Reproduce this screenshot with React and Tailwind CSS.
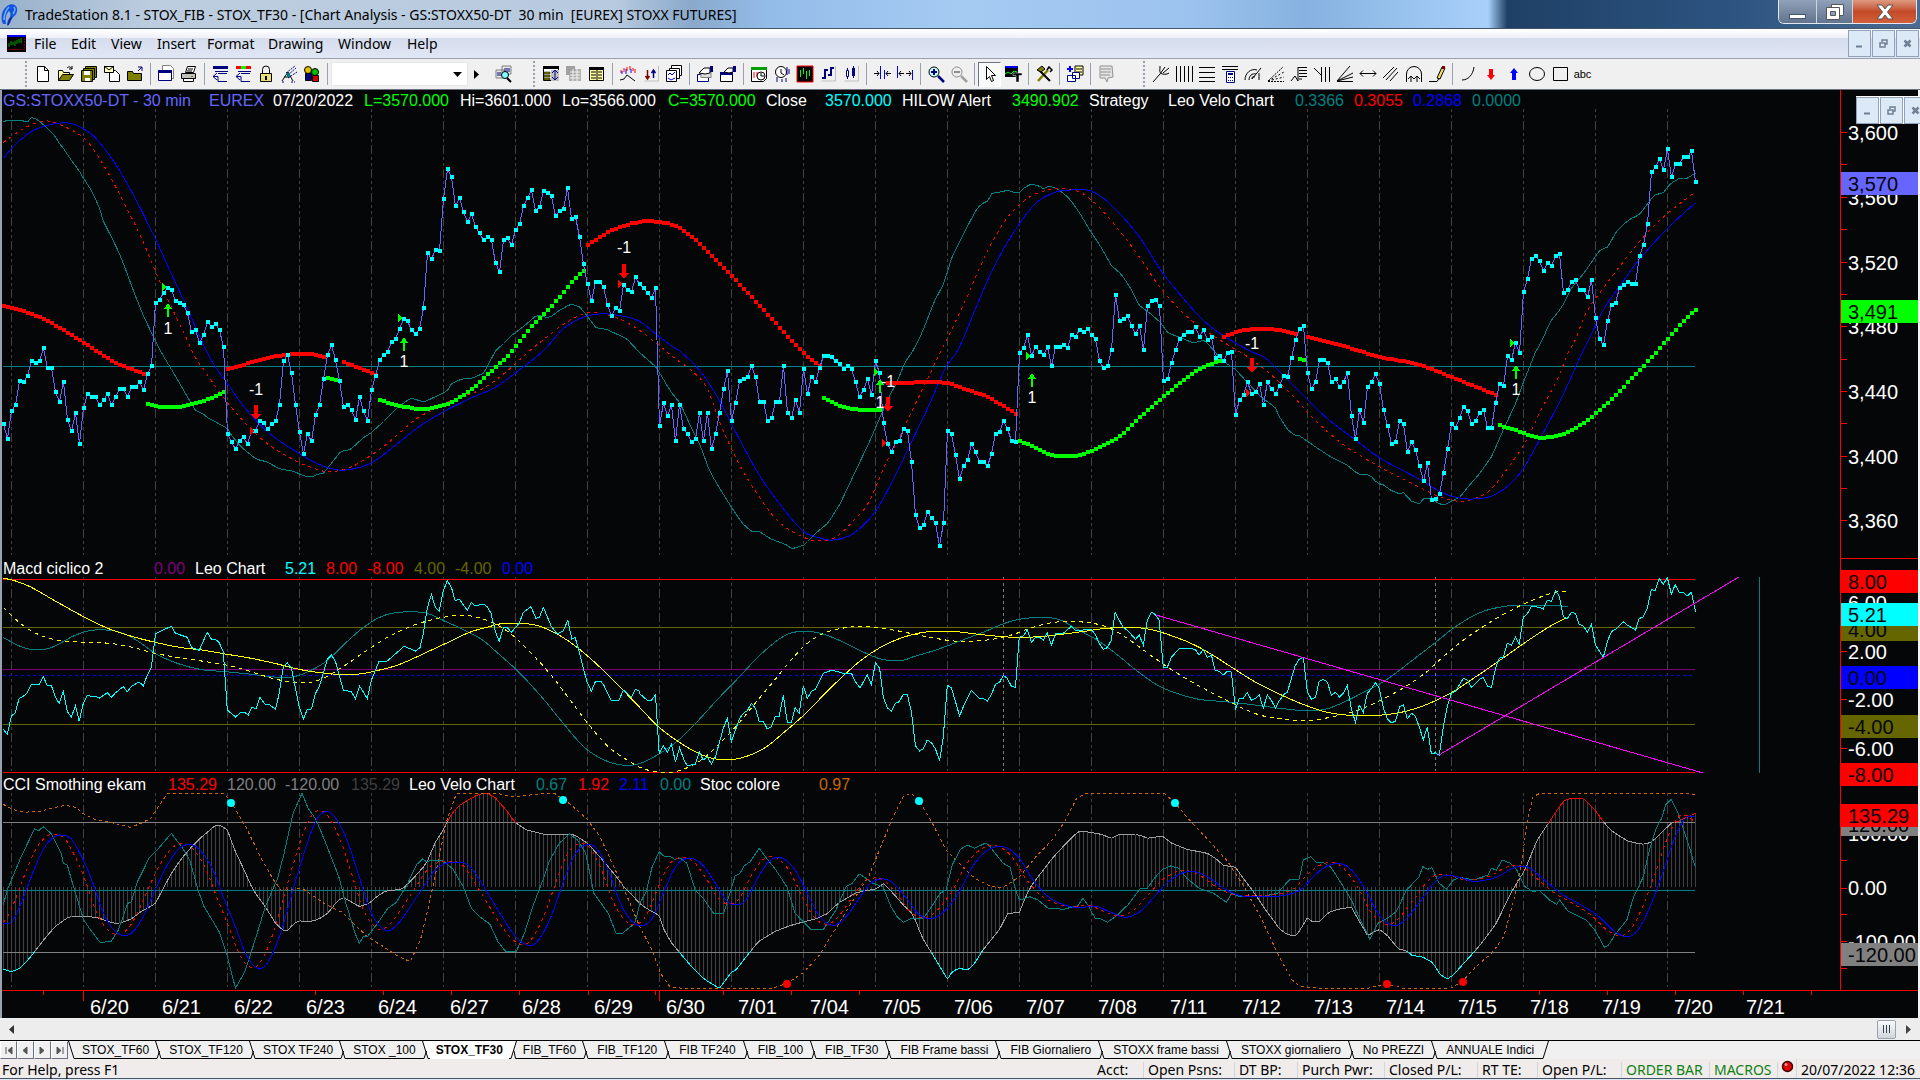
import React, { useState } from 'react';

const TEAL = '#008080';
const RED = '#ff0000';
const BLUE = '#0000ff';
const CYAN = '#00ffff';
const LIME = '#00ff00';
const YELLOW = '#ffff00';
const OLIVE = '#666600';
const MAGENTA = '#ff00ff';
const ORANGE = '#cc6600';

// Bars are 4px apart, 18 bars per trading day
const FIRST_BAR = 3.5;
const BAR_STEP = 4;
const DAY_LINES = Array.from({ length: 19 }, (_, i) => 11.5 + i * 72).concat([1379.5, 1451.5, 1523.5, 1595.5, 1667.5]);
const DAYS = ['6/20', '6/21', '6/22', '6/23', '6/24', '6/27', '6/28', '6/29', '6/30', '7/01', '7/04', '7/05', '7/06', '7/07', '7/08', '7/11', '7/12', '7/13', '7/14', '7/15', '7/18', '7/19', '7/20', '7/21'];

const PRICE = [
  424, 439, 411, 405, 381, 382, 376, 361, 363, 361, 348, 368, 368, 392, 402, 382, 420, 431,
  413, 444, 408, 394, 397, 397, 405, 400, 394, 405, 397, 389, 389, 397, 387, 387, 382, 390,
  374, 366, 303, 300, 293, 288, 290, 301, 303, 305, 313, 332, 330, 343, 335, 322, 327, 324,
  330, 347, 434, 442, 449, 441, 437, 444, 431, 431, 421, 423, 429, 424, 421, 405, 361, 355,
  373, 405, 432, 454, 434, 441, 415, 405, 379, 355, 345, 360, 381, 407, 405, 410, 420, 397,
  411, 421, 390, 376, 360, 355, 352, 342, 339, 329, 319, 321, 330, 334, 329, 308, 253, 259,
  250, 251, 199, 169, 177, 206, 198, 212, 222, 214, 227, 233, 240, 237, 240, 263, 272, 240,
  238, 245, 230, 224, 206, 198, 190, 211, 207, 191, 193, 196, 216, 211, 209, 188, 219, 217,
  237, 264, 284, 301, 282, 282, 287, 305, 316, 308, 311, 285, 290, 292, 277, 284, 288, 293,
  298, 288, 426, 403, 416, 405, 441, 405, 429, 434, 442, 439, 413, 441, 413, 449, 434, 413,
  389, 371, 421, 403, 381, 379, 377, 366, 377, 402, 402, 421, 418, 402, 402, 366, 413, 418,
  400, 413, 369, 394, 377, 382, 368, 356, 356, 357, 361, 364, 369, 366, 369, 382, 397, 390,
  379, 395, 361, 373, 423, 444, 452, 442, 441, 429, 431, 462, 515, 528, 525, 512, 518, 523,
  546, 523, 431, 434, 455, 479, 466, 460, 444, 452, 462, 462, 466, 454, 434, 432, 421, 429,
  441, 442, 353, 348, 335, 356, 347, 352, 355, 347, 366, 347, 347, 345, 348, 335, 337, 330,
  332, 329, 335, 339, 361, 368, 366, 350, 295, 321, 319, 316, 326, 334, 326, 350, 306, 301,
  300, 306, 381, 379, 363, 350, 339, 335, 332, 332, 327, 337, 330, 340, 337, 358, 356, 361,
  353, 352, 415, 400, 395, 382, 394, 392, 384, 405, 382, 389, 394, 386, 376, 377, 358, 340,
  329, 326, 373, 389, 382, 360, 360, 363, 382, 379, 387, 382, 373, 416, 439, 410, 423, 387,
  382, 374, 384, 410, 426, 444, 442, 421, 424, 452, 442, 450, 466, 481, 463, 500, 499, 494,
  473, 449, 424, 428, 418, 407, 411, 424, 421, 413, 410, 428, 428, 403, 384, 386, 356, 360,
  343, 353, 292, 279, 259, 256, 261, 271, 263, 266, 256, 254, 293, 290, 282, 280, 290, 290,
  297, 280, 318, 339, 345, 321, 305, 303, 288, 285, 282, 284, 284, 256, 245, 224, 172, 167,
  159, 170, 149, 177, 164, 164, 157, 157, 151, 182,
];

const parse = (text) => text.trim().split(/\s+/).map((pair) => pair.split(',').map(Number));

// Sample blocks of the lower panes: each block has its own left edge, stored at 2.45 x 3 units per pixel
const blocks = (top, ...parts) =>
  parts.flatMap((text, i) => parse(text).map(([x, y]) => [i * 640 + x / 2.45, top + y / 3]));

const VELO_FAST = parse(`3,122 8,120 24,121 28,122 32,117 38,120 45,126 55,136 59,143 64,149 71,160 78,169 84,179 93,193 99,207 104,223
112,238 121,257 128,276 135,295 144,317 154,338 161,352 176,377 188,398 196,411 202,413 208,418 227,428 232,436 241,447 256,459 267,462
280,469 293,471 304,476 312,477 318,474 324,473 330,465 341,451 350,450 363,438 371,433 384,421 398,407 411,398 424,402 439,395 447,391
452,383 462,379 473,378 484,373 489,363 496,350 502,345 512,335 523,327 537,315 549,318 560,310 571,304 580,307 588,317 596,328 606,329
627,339 639,352 656,367 671,392 680,403 691,427 701,447 709,470 720,489 732,508 742,523 751,531 760,532 771,539 787,545 792,549 804,545
816,533 828,523 840,504 856,470 869,443 881,415 889,397 897,382 905,362 913,351 922,333 934,302 944,283 952,257 964,233 975,212 981,204
988,201 992,193 1001,192 1008,190 1018,194 1024,188 1031,184 1039,186 1044,189 1049,186 1058,189 1069,198 1079,212 1091,232 1101,247
1111,265 1122,275 1131,289 1139,305 1152,315 1160,322 1168,333 1179,337 1193,343 1205,340 1213,350 1224,362 1235,369 1248,383 1262,398
1275,407 1280,418 1288,430 1294,435 1300,436 1317,448 1331,457 1347,465 1358,474 1370,475 1377,483 1384,485 1390,490 1400,494 1403,492
1411,501 1420,504 1424,498 1433,499 1437,503 1444,505 1460,497 1468,487 1480,473 1492,456 1504,428 1515,405 1525,378 1536,351 1541,343
1550,322 1562,307 1572,287 1584,273 1600,250 1608,247 1616,232 1625,223 1632,218 1639,215 1649,202 1654,195 1663,193 1670,184 1680,178
1688,178 1695,173`);

const VELO_MID = parse(`3,143 18,132 33,124 47,121 61,125 84,138 98,156 112,180 124,203 141,237 155,270 169,302 184,333 194,355 204,370
227,402 249,427 269,445 300,463 316,469 330,472 351,467 367,458 388,443 416,419 433,410 453,400 482,389 506,372 527,353 543,340 567,322
587,313 604,314 624,321 639,330 656,343 677,360 691,370 707,388 720,423 738,462 758,495 779,522 803,537 820,541 836,537 856,518 869,502
885,465 897,442 909,417 926,382 940,353 950,333 967,297 987,252 1007,218 1028,198 1048,190 1067,189 1085,195 1109,218 1138,255 1162,290
1191,320 1220,340 1248,357 1269,373 1279,382 1292,395 1313,418 1341,443 1378,466 1419,487 1443,498 1464,501 1488,492 1504,473 1525,443
1541,410 1558,378 1568,353 1574,343 1586,313 1602,290 1627,257 1647,233 1668,213 1695,192`);

const VELO_SLOW = parse(`3,159 11,149 29,133 45,126 61,123 73,124 90,133 104,148 118,168 135,198 155,238 171,273 188,310 210,358 227,383
245,408 269,433 300,454 316,463 333,469 347,470 371,463 392,448 420,426 445,411 469,399 496,387 514,374 543,351 563,329 584,317 600,314
616,315 639,321 657,335 673,347 681,352 701,372 718,398 732,425 758,473 779,503 803,531 820,538 834,540 854,533 875,512 893,480 909,447
930,403 946,367 958,350 975,310 991,273 1007,243 1020,223 1036,203 1056,192 1073,190 1091,191 1109,203 1138,235 1162,272 1183,298
1203,320 1224,336 1252,352 1264,357 1279,371 1300,392 1329,420 1353,438 1380,458 1419,479 1443,493 1460,498 1474,499 1492,496 1509,485
1523,469 1541,437 1562,397 1582,353 1592,333 1602,312 1619,287 1639,260 1668,228 1695,203`);

const HILOW_RED = [
  '3,306 20,310 41,318 61,329 84,343 102,355 118,364 144,374',
  '227,369 253,362 278,356 296,354 312,354 324,357',
  '343,362 359,368 376,375',
  '587,245 612,230 639,222 660,222 677,227 693,238 713,258 738,283 767,314 803,353 819,366',
  '887,383 905,383 926,382 946,383 967,390 987,397 1016,414',
  '1223,337 1240,331 1260,329 1279,330 1295,334',
  '1307,337 1333,343 1362,352 1380,357 1419,365 1451,377 1496,395',
].map(parse);

const HILOW_GREEN = [
  '147,404 163,407 176,407 192,404 208,399 224,392',
  '327,378 339,381',
  '379,400 400,406 420,409 433,408 449,403 469,391 490,372 508,355 531,327 555,302 571,283 583,271',
  '823,398 840,406 860,410 880,410',
  '1019,441 1036,448 1052,455 1073,456 1093,450 1118,437 1142,415 1171,390 1199,369 1219,361',
  '1299,359 1303,360',
  '1499,425 1517,431 1535,437 1551,437 1570,431 1596,413 1627,383 1656,352 1676,329 1695,310',
].map(parse);

const LEO = blocks(560,
  `8,508 18,523 28,468 37,459 47,415 57,409 67,398 77,373 96,373 106,350 116,377 126,377 136,412 145,430 155,395 165,455 175,471 185,437
194,484 204,430 214,406 224,409 234,409 243,415 263,398 273,412 283,398 302,380 312,395 322,379 341,366 351,377 361,345 371,322 381,222
390,215 420,199 430,220 459,232 469,262 488,271 508,217 518,238 528,238 537,248 547,275 557,450 577,471 588,459 600,457 608,466 616,443
628,445 637,412 650,434 660,434 675,448 684,400 694,320 704,308 714,325 733,440 743,478 753,448 763,447 773,400 782,380 792,340 802,298
812,285 822,305 831,345 841,390 861,395 871,416 881,378 900,416 910,360 929,303 949,303 990,259 1018,273 1029,263 1037,220 1047,145
1057,103 1067,143 1076,153 1086,92 1096,62 1106,82 1115,122 1125,117 1135,135 1145,151 1155,127 1164,138 1184,132 1194,140 1203,160
1213,212 1223,244 1233,203 1243,203 1253,217 1272,190 1282,157 1301,140 1313,175 1322,171 1331,142 1350,197 1365,222 1380,212 1391,181
1401,237 1409,232 1419,275 1429,325 1439,368 1449,394 1459,364 1472,364 1480,377 1498,423 1517,420 1527,390 1547,411 1557,388 1566,394`,
  `0,402 18,421 28,421 38,405 47,580 57,557 67,577 77,552 87,606 97,563 107,598 116,617 136,612 145,575 155,600 165,590 175,612 185,590
204,505 214,475 224,545 243,478 253,460 263,452 273,430 283,445 292,484 302,484 312,507 322,500 331,470 341,470 351,406 361,487 371,487
380,443 390,460 400,378 410,415 420,394 430,388 449,340 469,331 488,336 498,340 518,340 528,365 539,384 557,345 567,373 577,308 587,325
596,412 606,443 616,454 626,430 635,425 645,403 655,403 665,455 675,558 685,573 694,566 704,540 714,548 724,567 734,603 743,530 753,376
763,383 773,425 783,468 792,440 812,391 822,404 832,415 841,415 851,423 861,404 871,373 881,367 890,346 900,355 910,379 920,382 929,232
939,228 949,210 959,247 969,232 979,232 988,240 998,218 1008,256 1018,220 1037,220 1057,199 1067,212 1106,208 1116,225 1125,250 1135,268
1145,263 1155,240 1164,157 1174,180 1184,203 1194,210 1214,238 1223,225 1233,255 1243,180 1253,157 1262,163 1272,180 1282,323 1292,322
1302,292 1321,266 1350,266 1360,268 1370,285 1380,268 1390,293 1400,285 1409,330 1419,334 1429,345 1439,334 1449,336 1459,450 1468,415
1478,415 1488,397 1498,421 1508,415 1517,404 1527,445 1537,404 1547,421 1557,445 1566,423`,
  `0,420 8,404 18,397 28,355 37,318 47,298 57,292 67,394 77,418 87,412 96,364 106,358 116,366 126,406 136,397 146,411 155,400 165,377
175,448 185,487 194,435 204,457 214,400 224,386 234,368 243,384 253,443 263,476 273,489 283,483 293,440 302,434 312,476 322,460 331,468
341,500 351,539 361,502 371,582 381,578 390,586 400,500 410,440 420,400 430,394 439,376 449,355 459,360 469,382 479,370 489,358 498,352
508,378 518,383 528,325 537,295 547,292 557,250 567,255 577,230 586,252 596,172 606,162 616,138 635,142 645,147 655,120 665,125 675,92
684,108 694,170 704,176 714,157 724,160 733,193 743,198 753,216 763,193 773,255 792,292 802,245 812,215 822,208 841,185 851,195 871,210
880,176 890,170 900,145 910,88 919,93 929,55 939,73 949,53 959,102 968,74 978,97 988,97 998,108 1008,97 1018,155`);

const MACD_SLOW = blocks(560,
  `8,55 30,60 70,78 100,98 150,133 205,170 260,203 320,228 380,247 440,262 500,271 557,283 620,296 680,312 733,328 790,339 830,343 880,342
930,330 970,317 1010,297 1050,274 1100,246 1150,217 1190,203 1230,191 1290,191 1330,202 1380,233 1430,278 1490,345 1530,395`,
  `0,443 45,500 100,550 140,578 180,596 230,598 270,585 310,560 350,520 400,467 450,405 500,345 550,293 600,255 650,230 700,216 760,214
810,220 860,227 920,232 980,230 1040,222 1100,212 1150,204 1200,203 1240,206 1290,222 1350,250 1400,283 1460,330 1510,368`,
  '0,403 50,430 110,455 170,466 240,466 300,456 360,433 420,398 480,350 540,300 600,248 660,200 702,173');

const MACD_DASH = blocks(560,
  `8,142 40,180 80,215 130,238 180,245 250,248 310,258 380,280 450,295 520,308 570,319 620,337 670,356 720,367 760,367 800,350 850,312
910,262 960,225 1020,193 1080,173 1130,166 1170,172 1210,190 1250,220 1300,278 1350,345 1400,425 1440,490 1490,560 1530,595`,
  `0,622 30,633 70,638 110,626 150,600 200,545 250,478 290,418 330,360 370,300 410,250 450,220 490,206 540,199 590,204 650,217 710,232
780,244 850,240 910,225 960,203 1000,190 1050,184 1110,190 1150,204 1200,240 1250,285 1310,335 1370,378 1440,423 1510,462`,
  '0,476 70,482 130,470 180,455 240,425 310,378 360,335 400,290 450,240 510,190 560,155 610,125 670,98 702,94');

const MACD_TEAL = blocks(560,
  `8,232 40,254 75,268 110,268 140,255 180,228 220,212 260,210 300,219 340,245 380,280 430,308 490,328 550,335 610,342 680,352 720,350
760,332 800,303 850,245 890,203 930,172 970,158 1040,158 1080,178 1130,206 1180,238 1220,280 1270,335 1330,415 1380,490 1430,560
1480,600 1530,616`,
  `0,610 45,583 90,545 140,485 190,418 240,355 290,290 340,238 370,219 410,214 450,223 490,242 540,272 590,297 640,302 670,290 720,272
780,245 840,217 900,187 940,176 990,172 1030,180 1070,207 1120,240 1170,285 1220,335 1270,377 1320,402 1370,418 1430,425 1500,434`,
  '0,445 60,452 110,448 150,430 200,400 260,360 320,305 380,248 430,200 490,158 550,139 600,136 680,136 702,141');

const CCI = blocks(790,
  `8,538 28,545 45,538 65,515 85,485 110,445 135,410 155,392 170,380 220,380 245,385 270,397 290,401 320,388 345,365 380,342 400,295
420,250 445,205 470,170 490,145 510,125 525,107 540,105 557,120 575,180 600,245 620,300 650,350 675,400 700,428 720,400 735,392 755,396
780,388 805,368 825,335 840,322 860,335 880,350 905,340 925,318 945,303 985,298 1000,280 1020,255 1045,220 1065,160 1085,122 1096,95
1110,65 1130,42 1165,18 1180,10 1195,10 1215,25 1240,60 1262,97 1290,120 1330,132 1360,135 1405,133 1440,160 1480,215 1510,260 1530,293
1560,330`,
  `0,342 25,362 47,375 55,410 75,455 100,492 130,535 160,570 195,595 210,570 225,545 235,540 270,485 290,455 330,425 365,408 405,394
435,385 460,370 485,340 530,308 580,296 597,280 620,310 645,345 670,375 690,440 715,490 735,530 753,568 765,545 780,535 805,540 820,520
840,480 880,420 900,372 930,366 945,320 960,285 985,245 1010,205 1040,165 1060,140 1075,124 1100,126 1130,133 1155,145 1175,133 1220,134
1245,145 1280,138 1300,158 1340,178 1390,190 1410,205 1430,227 1458,230 1475,260 1500,300 1530,355 1560,405`,
  `0,418 20,435 40,438 68,382 78,394 95,397 120,366 150,356 175,352 190,385 215,437 243,418 262,435 290,477 310,482 325,498 345,498
375,518 390,550 408,568 425,555 450,520 475,487 500,450 530,400 565,310 600,240 630,150 660,95 690,40 700,28 725,25 745,26 775,65
795,100 815,125 850,152 885,163 905,160 925,140 958,100 980,92 1018,70`);

const CYCLE_FAST = blocks(790,
  `8,345 18,300 50,205 85,116 95,122 106,110 125,130 150,190 155,220 165,225 180,290 205,390 225,425 245,457 272,455 290,420 313,340
322,335 335,280 365,205 385,180 420,130 445,170 465,210 485,300 500,350 520,390 537,425 555,490 577,595 600,545 625,450 650,350 680,265
695,195 718,70 740,10 755,55 775,90 800,165 830,260 845,330 870,430 880,460 890,440 900,440 925,400 950,355 970,338 995,290 1020,225
1035,207 1045,215 1060,210 1085,212 1110,238 1135,290 1155,355 1175,380 1200,402 1220,455 1240,486 1265,484 1285,430 1305,350 1330,270
1345,215 1370,160 1395,132 1415,150 1435,190 1455,310 1490,370 1510,432 1525,430 1555,400 1566,350`,
  `0,340 15,305 30,230 47,185 60,200 75,200 85,208 100,205 115,220 135,300 155,325 180,370 205,370 220,310 233,258 245,250 255,228
270,215 292,175 310,205 330,235 360,290 380,370 420,420 450,417 480,360 505,290 520,280 537,252 550,262 570,280 595,290 615,350 630,380
645,397 665,385 695,384 720,340 735,310 750,300 765,225 785,178 802,165 820,175 845,160 855,165 870,190 890,220 907,232 920,300 930,330
955,320 975,330 1000,355 1040,358 1060,350 1070,352 1085,325 1097,345 1115,385 1130,387 1145,397 1165,380 1195,345 1225,297 1243,295
1260,265 1280,238 1300,228 1320,235 1340,265 1370,295 1405,310 1437,337 1450,308 1470,320 1525,320 1566,308`,
  `0,300 25,268 47,267 57,210 75,200 88,216 105,217 125,232 150,280 175,330 195,385 220,447 240,400 265,383 285,365 310,300 340,262
350,230 362,238 372,233 390,280 408,297 425,270 440,262 475,270 510,255 518,235 530,240 545,210 565,220 580,240 600,290 620,305 635,300
660,330 678,343 685,330 705,363 750,390 770,418 795,472 805,465 820,435 850,390 865,325 890,260 905,180 920,120 935,85 945,45 958,28
975,70 985,105 1000,160 1017,230`);

const CYCLE_SLOW = blocks(790,
  `8,400 30,395 55,330 80,250 105,180 130,143 150,135 175,147 200,200 225,270 250,360 275,415 305,438 330,420 355,370 380,300 410,225
440,175 465,163 490,180 520,235 550,330 580,420 605,500 635,537 660,510 690,420 720,290 750,170 775,90 798,64 820,80 850,150 880,260
910,370 945,422 970,408 1000,360 1030,305 1070,235 1110,217 1150,228 1190,300 1230,380 1265,442 1297,467 1320,450 1350,380 1385,260
1410,190 1440,163 1465,180 1490,240 1520,340 1545,390`,
  `0,408 15,403 35,375 60,300 90,225 120,205 150,220 185,280 210,330 235,345 260,330 290,260 320,210 350,205 380,240 410,310 440,380
475,406 505,380 540,320 570,275 610,271 650,320 680,370 712,386 740,370 780,310 820,220 860,175 895,172 930,205 960,265 1000,320
1040,345 1080,353 1115,348 1150,365 1190,382 1225,365 1260,320 1300,270 1345,244 1390,260 1430,295 1470,317 1510,320`,
  `0,318 50,300 80,262 110,232 145,220 175,240 210,300 240,370 275,407 300,397 340,340 380,275 405,256 440,262 475,274 530,262 570,235
605,230 640,262 690,312 730,340 780,378 820,425 855,440 880,415 910,340 940,240 965,150 990,88 1005,78 1018,82`);

// the middle line leads the slow one by seven pixels
const CYCLE_MID = CYCLE_SLOW.map(([x, y]) => [x - 7, y - 1]).concat([[1695, 823]]);

const STOC = blocks(790,
  `8,43 30,58 60,67 100,63 135,52 160,46 185,52 205,72 235,90 270,97 320,112 345,100 370,85 385,55 410,12 450,11 550,11 567,38 580,65
600,105 640,205 670,270 690,302 740,295 770,320 800,345 840,368 870,405 900,440 940,470 970,495 1005,515 1030,450 1050,350 1070,235
1095,90 1118,12 1220,11 1260,20 1330,11 1360,11 1400,45 1440,90 1470,140 1500,220 1530,300 1550,360`,
  `0,412 30,480 50,550 75,593 150,596 325,595 360,580 400,548 440,495 480,415 520,335 560,260 590,170 620,80 645,20 665,10 683,30 710,85
750,180 790,230 820,265 860,290 890,292 930,260 970,200 1010,150 1040,95 1070,25 1090,11 1285,11 1310,38 1350,95 1400,160 1440,215
1480,290 1520,380`,
  `0,505 30,570 50,590 100,595 215,595 240,587 285,587 300,595 420,594 450,570 480,530 520,488 548,440 575,320 590,230 608,80 620,20
635,11 1008,11 1018,16`);

const slope = (pts, i) => {
  const a = pts[Math.max(0, i - 1)];
  const b = pts[Math.min(pts.length - 1, i + 1)];
  return (b[1] - a[1]) / (b[0] - a[0] || 1);
};

// Hermite interpolation between control points
const valueAt = (pts, x, curved = true) => {
  let i = 0;
  while (i < pts.length - 2 && pts[i + 1][0] < x) i++;
  const [x0, y0] = pts[i];
  const [x1, y1] = pts[i + 1];
  const w = x1 - x0;
  const t = Math.min(1, Math.max(0, (x - x0) / w));
  if (!curved) return y0 + (y1 - y0) * t;
  const t2 = t * t;
  const t3 = t2 * t;
  return (2 * t3 - 3 * t2 + 1) * y0 + (t3 - 2 * t2 + t) * w * slope(pts, i)
    + (3 * t2 - 2 * t3) * y1 + (t3 - t2) * w * slope(pts, i + 1);
};

const sample = (pts, curved) => {
  const last = pts[pts.length - 1][0];
  const out = [];
  for (let x = FIRST_BAR; x <= last + 1; x += BAR_STEP) {
    if (x >= pts[0][0] - 1) out.push([x, valueAt(pts, x, curved)]);
  }
  return out;
};

const join = (pts) => pts.map(([x, y]) => `${x.toFixed(1)},${y.toFixed(1)}`).join(' ');

const Line = ({ pts, color, dash, width = 1 }) => (
  <polyline points={join(pts)} fill="none" stroke={color} strokeWidth={width} strokeDasharray={dash} />
);

const Curve = ({ pts, ...rest }) => <Line pts={sample(pts, true)} {...rest} />;

const Level = ({ y, color, dash, width = 1 }) => (
  <line x1="3" x2="1695" y1={y} y2={y} stroke={color} strokeWidth={width} strokeDasharray={dash} />
);

const DayGrid = ({ top, bottom }) => DAY_LINES.map((x) => (
  <line key={x} x1={x} x2={x} y1={top} y2={bottom} stroke="#404040" strokeDasharray="3 3 3 3 9 3" />
));

const Squares = ({ pts, color }) => sample(pts, true).map(([x, y]) => (
  <rect key={x} x={x - 1.5} y={Math.round(y) - 2} width="4" height="4" fill={color} />
));

const SIGNALS = [
  { x: 168, tip: 303, text: 328, side: 1, mark: 287 },
  { x: 404, tip: 337, text: 361, side: 1, mark: 318 },
  { x: 256, tip: 420, text: 389, side: -1, mark: 431 },
  { x: 624, tip: 279, text: 247, side: -1, mark: 284 },
  { x: 880, tip: 379, text: 402, side: 1, mark: 372 },
  { x: 888, tip: 412, text: 381, side: -1, mark: 443 },
  { x: 1032, tip: 373, text: 397, side: 1, mark: 356 },
  { x: 1252, tip: 373, text: 343, side: -1, mark: 393 },
  { x: 1516, tip: 365, text: 389, side: 1, mark: 343 },
];

const Signal = ({ x, tip, text, side, mark }) => {
  const up = side > 0;
  const arrow = up ? 'l4 6h-3v8h-2v-8h-3z' : 'l5 -6h-3v-9h-4v9h-3z';
  return (
    <g>
      <path d={`M${x - 6} ${mark - 4}l5 4l-5 4z`} fill={up ? LIME : RED} />
      <path d={`M${x} ${tip}${arrow}`} fill={up ? LIME : RED} />
      <text x={x} y={text + 6} textAnchor="middle" fontSize="16" fill="#ffffff">{side}</text>
    </g>
  );
};

const Plot = ({ top, height, children }) => (
  <svg viewBox={`2 ${top} 1838 ${height}`} className="block w-full h-auto font-['Liberation_Sans',sans-serif]" shapeRendering="crispEdges">
    {children}
  </svg>
);

const Legend = ({ items }) => (
  <div className="flex h-[19px] items-end pl-px text-base leading-4 whitespace-pre">
    {items.map(([text, cls], i) => <span key={i} className={`shrink-0 ${cls}`}>{text}</span>)}
  </div>
);

const Axis = ({ top, height, ticks, labels, children }) => (
  <svg width="78" height={height} viewBox={`1840 ${top} 78 ${height}`} className="shrink-0 overflow-visible font-['Liberation_Sans',sans-serif]">
    <g shapeRendering="crispEdges" stroke={RED}>
      <path d={`M1840.5 ${top}v${height}`} />
      {ticks.map((y) => <path key={y} d={`M1840 ${y}h7`} />)}
      {children}
    </g>
    {labels.map(([text, y, box]) => (
      <g key={text + y}>
        {box && <rect x="1841" y={y - 12} width="77" height="23" fill={box} />}
        <text x="1848" y={y + 7} fontSize="20" fill={box ? '#050608' : '#ffffff'}>{text}</text>
      </g>
    ))}
  </svg>
);

const PRICE_LEGEND = [
  ['GS:STOXX50-DT - 30 min', 'w-[206px] text-[#6666ff]'],
  ['EUREX', 'w-16 text-[#6666ff]'],
  ['07/20/2022', 'w-[91px] text-white'],
  ['L=3570.000', 'w-24 text-[#00ff00]'],
  ['Hi=3601.000', 'w-[102px] text-white'],
  ['Lo=3566.000', 'w-[106px] text-white'],
  ['C=3570.000', 'w-[98px] text-[#00ff00]'],
  ['Close', 'w-[59px] text-white'],
  ['3570.000', 'w-[77px] text-[#00ffff]'],
  ['HILOW Alert', 'w-[110px] text-white'],
  ['3490.902', 'w-[77px] text-[#00ff00]'],
  ['Strategy', 'w-[79px] text-white'],
  ['Leo Velo Chart', 'w-[127px] text-white'],
  ['0.3366', 'w-[59px] text-[#008080]'],
  ['0.3055', 'w-[59px] text-[#ff0000]'],
  ['0.2868', 'w-[59px] text-[#0000ff]'],
  ['0.0000', 'w-[59px] text-[#008080]'],
];

const MACD_LEGEND = [
  ['Macd ciclico 2', 'w-[151px] text-white'],
  ['0.00', 'w-[41px] text-[#800080]'],
  ['Leo Chart', 'w-[90px] text-white'],
  ['5.21', 'w-[41px] text-[#00ffff]'],
  ['8.00', 'w-[41px] text-[#ff0000]'],
  ['-8.00', 'w-[47px] text-[#ff0000]'],
  ['4.00', 'w-[41px] text-[#666600]'],
  ['-4.00', 'w-[47px] text-[#666600]'],
  ['0.00', 'w-[41px] text-[#0000ff]'],
];

const CCI_LEGEND = [
  ['CCI Smothing ekam', 'w-[165px] text-white'],
  ['135.29', 'w-[59px] text-[#ff0000]'],
  ['120.00', 'w-[58px] text-[#808080]'],
  ['-120.00', 'w-[66px] text-[#808080]'],
  ['135.29', 'w-[58px] text-[#404040]'],
  ['Leo Velo Chart', 'w-[127px] text-white'],
  ['0.67', 'w-[42px] text-[#008080]'],
  ['1.92', 'w-[41px] text-[#ff0000]'],
  ['2.11', 'w-[41px] text-[#0000ff]'],
  ['0.00', 'w-10 text-[#008080]'],
  ['Stoc colore', 'w-[119px] text-white'],
  ['0.97', 'w-[41px] text-[#cc6600]'],
];

const PricePane = () => {
  const pts = PRICE.map((y, i) => [FIRST_BAR + i * BAR_STEP, y]);
  return (
    <div className="flex">
      <div className="min-w-0 flex-1">
        <Legend items={PRICE_LEGEND} />
        <Plot top={109} height={449}>
          <DayGrid top={109} bottom={555} />
          <Level y={366.5} color={TEAL} />
          <Line pts={sample(VELO_FAST, false)} color={TEAL} />
          <Curve pts={VELO_MID} color={RED} dash="3 4" />
          <Curve pts={VELO_SLOW} color={BLUE} />
          {HILOW_RED.map((s, i) => <Squares key={i} pts={s} color={RED} />)}
          {HILOW_GREEN.map((s, i) => <Squares key={i} pts={s} color={LIME} />)}
          <Line pts={pts} color="#6666ff" />
          {pts.map(([x, y]) => <rect key={x} x={x - 1.5} y={y - 2} width="4" height="4" fill={CYAN} />)}
          {SIGNALS.map((s) => <Signal key={s.x} {...s} />)}
        </Plot>
      </div>
      <Axis
        top={90}
        height={468}
        ticks={[132.5, 164.5, 197.5, 229.5, 262.5, 294.5, 326.5, 359.5, 391.5, 423.5, 456.5, 488.5, 520.5]}
        labels={[
          ['3,600', 133], ['3,560', 198], ['3,520', 263], ['3,480', 327], ['3,440', 392], ['3,400', 457], ['3,360', 521],
          ['3,570', 184, '#6666ff'], ['3,491', 312, LIME],
        ]}
      >
        <path d="M1840 558.5h78" />
      </Axis>
    </div>
  );
};

const MacdPane = () => (
  <div className="flex">
    <div className="min-w-0 flex-1">
      <Legend items={MACD_LEGEND} />
      <Plot top={577} height={197}>
        <DayGrid top={577} bottom={771} />
        <path d="M1003.5 577V771M1435.5 577V771" stroke="#808080" strokeDasharray="3 3" />
        <Level y={579.5} color={RED} />
        <Level y={627.5} color={OLIVE} />
        <Level y={669.5} color="#800080" />
        <Level y={675.5} color={BLUE} dash="3 3" />
        <Level y={724.5} color={OLIVE} />
        <Level y={772.5} color={RED} />
        <Curve pts={MACD_TEAL} color={TEAL} />
        <Curve pts={MACD_DASH} color={YELLOW} dash="4 4" />
        <Curve pts={MACD_SLOW} color={YELLOW} />
        <Line pts={LEO} color={CYAN} />
        <path d="M1156 615L1703 773M1439 755L1739 577" stroke={MAGENTA} />
        <path d="M1759.5 577V773" stroke={TEAL} />
      </Plot>
    </div>
    <Axis
      top={558}
      height={216}
      ticks={[651.5, 699.5, 748.5]}
      labels={[
        ['6.00', 603], ['2.00', 652], ['-2.00', 700], ['-6.00', 749],
        ['8.00', 582, RED], ['4.00', 630, OLIVE], ['5.21', 615, CYAN],
        ['0.00', 678, BLUE], ['-4.00', 727, OLIVE], ['-8.00', 775, RED],
      ]}
    />
  </div>
);

const CciPane = () => {
  const bars = sample(CCI, false);
  const lineColor = (y) => (y < 822 ? RED : y > 952 ? CYAN : '#a0a0a0');
  return (
    <div className="flex">
      <div className="min-w-0 flex-1">
        <Legend items={CCI_LEGEND} />
        <Plot top={793} height={197}>
          <DayGrid top={793} bottom={987} />
          {bars.map(([x, y]) => <line key={x} x1={x} x2={x} y1="887" y2={y} stroke="#404040" />)}
          <Level y={822.5} color="#808080" />
          <Level y={952.5} color="#808080" />
          <Level y={890.5} color={TEAL} />
          {bars.slice(1).map(([x, y], i) => (
            <line key={x} x1={bars[i][0]} y1={bars[i][1]} x2={x} y2={y} stroke={lineColor((y + bars[i][1]) / 2)} />
          ))}
          <Line pts={STOC} color={ORANGE} dash="3 3" />
          <Line pts={CYCLE_FAST} color={TEAL} />
          <Curve pts={CYCLE_MID} color={RED} dash="3 4" />
          <Curve pts={CYCLE_SLOW} color={BLUE} />
          <g shapeRendering="auto">
            {[[231, 803], [563, 800], [919, 801], [1175, 803]].map(([x, y]) => <circle key={x} cx={x} cy={y} r="4" fill={CYAN} />)}
            {[[787, 984], [1387, 984], [1463, 982]].map(([x, y]) => <circle key={x} cx={x} cy={y} r="4" fill={RED} />)}
          </g>
        </Plot>
      </div>
      <Axis
        top={774}
        height={216}
        ticks={[860.5, 888.5, 914.5, 941.5, 968.5]}
        labels={[
          ['100.00', 834], ['0.00', 888], ['-100.00', 942],
          ['120.00', 825, '#808080'], ['135.29', 816, RED], ['-120.00', 955, '#808080'],
        ]}
      />
    </div>
  );
};

const DateAxis = () => (
  <div className="h-7">
    <svg viewBox="2 990 1916 28" className="block w-full h-auto font-['Liberation_Sans',sans-serif]">
      <g shapeRendering="crispEdges" stroke={RED}>
        <path d="M2 990.5H1918" />
        {[43, 315, 383, 451, 519, 588, 655, 723, 791, 859, 1539, 1607, 1675, 1743, 1811].map((x) => (
          <path key={x} d={`M${x + 0.5} 990v5`} />
        ))}
        <path d="M83.5 990v11M659.5 990v11" />
      </g>
      {DAYS.map((day, i) => <text key={day} x={90 + i * 72} y="1014" fontSize="20" fill="#ffffff">{day}</text>)}
    </svg>
  </div>
);

// Toolbar glyphs, each drawn on an 18 x 18 grid
const K = '#000000';
const N = '#000080';
const GLYPHS = {
  New: <path d="M3.5 1.5h7l4 4v11h-11zM10.5 1.5v4h4" fill="#fff" stroke={K} />,
  Open: <><path d="M1.5 15.5v-10h4l1 2h6v3" fill="#ffff99" stroke={K} /><path d="M1.5 15.5l4-6h11l-4 6z" fill="#808000" stroke={K} /><path d="M10 3c2-2 4-1 5 1m0-3v3h-3" fill="none" stroke={K} /></>,
  'Save All': <><path d="M5.5 1.5h11v11h-11z" fill="#808000" stroke={K} /><path d="M3.5 3.5h11v11h-11z" fill="#808000" stroke={K} /><path d="M1.5 5.5h11v11h-11z" fill="#808000" stroke={K} /><path d="M4 6h6v4H4zM5 13h5v3H5z" fill="#fff" /></>,
  Import: <><path d="M6.5 5.5h6l4 4v7h-10z" fill="#fff" stroke={K} /><path d="M1.5 1.5h9v6h-9z" fill="#ffffc0" stroke={K} /><path d="M1 1l5 4l5-4" fill="none" stroke={K} /></>,
  Folder: <><path d="M1.5 15.5v-9h5l1 2h8v7z" fill="#808000" stroke={K} /><path d="M12 6l4-4m-4 0h4v4" fill="none" stroke={N} /></>,
  'New Window': <><path d="M5.5 .5h8l3 3v10h-11z" fill="#fff" stroke="#808080" /><path d="M1.5 5.5h13v10h-13z" fill="#fff" stroke={N} /><path d="M1 5h14v3H1z" fill={N} /></>,
  Print: <><path d="M5.5 7.5l2-6h8l-2 6z" fill="#fff" stroke={K} /><path d="M1.5 8.5h14v5h-14z" fill="#c0c0c0" stroke={K} /><path d="M3.5 13.5h10v3h-10zM8 4h5M7 6h5" fill="#fff" stroke={K} /><path d="M11 11h2v1h-2z" fill="#808000" /></>,
  'Send Back': <><path d="M2 1h15v3H2zM4 6h13v1H4z" fill={N} /><path d="M2 11.5h5M6 8l-4 3.500l4 3.500M7 8.500h9M7 16.500h9M7 11.500v5" fill="none" stroke={N} /></>,
  'Send Group': <><path d="M2 1h15v3H2z" fill={RED} /><path d="M7 1h5v3H7z" fill={LIME} /><path d="M4 6h13v1H4z" fill={N} /><path d="M2 11.500h5M6 8l-4 3.500l4 3.500M7 8.500h9M7 16.500h9M7 11.500v5" fill="none" stroke={N} /></>,
  Lock: <><path d="M5.500 8V4.500a3 3 0 0 1 7 0V8" fill="none" stroke={K} /><path d="M3.500 8.500h11v8h-11z" fill="#e8e070" stroke={K} /><path d="M8 11h2v4H8z" fill={K} /></>,
  Satellite: <><path d="M2 16l6-9l5 9M4 12h6" fill="none" stroke={K} /><path d="M6 8l9-7m-7 9l8-7m-8 10l9-6M2 17h3m6 0h4" fill="none" stroke={N} strokeDasharray="2 1" /><path d="M7 8h3v4H7z" fill={TEAL} /></>,
  Symbols: <><circle cx="5" cy="5" r="3.500" fill="#e0c000" stroke={K} /><circle cx="12" cy="7" r="3.500" fill="#00c000" stroke={K} /><path d="M2.500 8.500h6v7h-6z" fill={N} stroke={K} /><path d="M9.500 10.500h6v6h-6z" fill="#d00000" stroke={K} /></>,
  Lookup: <><path d="M1 5h8v8H1zM7 1h9v8H7z" fill="#e8e8e8" stroke="#808080" /><path d="M3 7v4m2-4v4m5-8v4m2-4v4m2-4v4" stroke={N} /><circle cx="10" cy="10" r="3.500" fill="#80ffff" stroke={K} /><path d="M12 13l4 4" stroke={K} strokeWidth="2" /></>,
  Quotes: <><path d="M1.500 1.500h15v14h-15z" fill="#fff" stroke={K} /><path d="M1 1h16v3H1z" fill={K} /><path d="M9 5h8v11H9z" fill="#c0c0c0" /><path d="M13 5v10m-3-7l3-3l3 3m-6 4l3 3l3-3" fill="none" stroke={N} /><path d="M2 7h6v2H2zM2 10h6v2H2zM2 13h6v2H2z" fill="#808000" stroke={K} strokeWidth=".5" /></>,
  Sheet: <><path d="M4 4h12v12H4z" fill="#b0b0b0" /><path d="M1 1h9v9H1z" fill="#a0a0a0" /><path d="M5 7h10M5 10h10M5 13h10M8 4v12M12 4v12" stroke="#f0f0f0" /></>,
  Table: <><path d="M1.500 2.500h14v13h-14z" fill="#ffffa0" stroke={K} /><path d="M1 2h15v3H1z" fill={K} /><path d="M3 7h5m-5 3h5m-5 3h5m2-6h4m-4 3h4m-4 3h4M9 5v11" stroke={K} /></>,
  Indicator: <><path d="M1 15l4-1l3-4l4 3l4 3" fill="none" stroke={K} /><path d="M2 8V5m3 2V3m3 3V2m3 3V1m3 5V3m2 5V4" stroke={RED} /><path d="M3 9V6m4 3V4m5 4V4" stroke={BLUE} /></>,
  Arrows: <><path d="M5.500 5v9m-2-3l2 3l2-3" fill="none" stroke="#800000" strokeWidth="1.500" /><path d="M11.500 13V5M9.500 8l2-3l2 3" fill="none" stroke={N} strokeWidth="1.500" /><path d="M16.500 1v15h-14" fill="none" stroke="#c0c0c0" /></>,
  Charts: <><path d="M6.500 .5h10v10h-10z" fill="#fff" stroke={K} /><path d="M4.500 3.500h10v10h-10z" fill="#fff" stroke={K} /><path d="M1.500 5.500h10v11h-10z" fill="#fff" stroke={K} /><path d="M3 10l2-2l2 2l3-3M3 13l3 2l4-2" fill="none" stroke={BLUE} /></>,
  Format: <><path d="M1.500 9.500h11v7h-11z" fill="#fff" stroke={N} /><path d="M5 5.500h10v7H5z" fill="#ddd" stroke="#808080" /><path d="M3 8l5-5h6v5l-5 1z" fill="#fff" stroke={K} /><path d="M14 1h3v6h-3z" fill={N} /></>,
  Properties: <><path d="M1.500 7.500h12v9h-12z" fill="#fff" stroke={K} /><path d="M1 7h13v3H1z" fill={N} /><path d="M5 7l4-4h5v4l-4 1z" fill="#fff" stroke={K} /><path d="M14 1h3v6h-3z" fill={N} /></>,
  Schedule: <><path d="M1.500 2.500h15v11l-3 3h-12z" fill="#fff" stroke={K} /><path d="M1 2h16v3H1z" fill="#00a000" /><path d="M4 7v6m3-6v5" stroke={RED} /><circle cx="11" cy="11" r="4" fill="#fff" stroke={K} /><path d="M11 8v3h3" fill="none" stroke={K} /></>,
  Clock: <><circle cx="8" cy="7" r="5.500" fill="#fff" stroke={K} /><path d="M8 4v4l3 2" fill="none" stroke={K} /><path d="M14 2v8m2-6v5M4 12v5m5-3v3m4-4v4" stroke={N} /></>,
  Bars: <><path d="M1 1h16v16H1z" fill={K} stroke={RED} /><path d="M4.500 5v7m3-9v6m3-3v8m3-9v6" stroke={LIME} /></>,
  OHLC: <><path d="M6 4v10M3 13h3m0-8h3M12 2v9M9 10h3m0-7h3" fill="none" stroke={N} strokeWidth="2" /><path d="M16.500 1v15h-14" stroke="#c0c0c0" fill="none" /></>,
  Candle: <><path d="M5.500 3v11M11.500 1v12" stroke={N} /><path d="M4.500 5.500h2v6h-2z" fill="#fff" stroke={N} /><path d="M10 3h3v8h-3z" fill={N} /><path d="M16.500 1v15h-14" stroke="#c0c0c0" fill="none" /></>,
  Narrow: <><path d="M7.500 1v13M11.500 5v9" stroke={BLUE} /><path d="M1 8.500h5M4 6l2 2.500l-2 2.500M18 8.500h-5m2-2.500l-2 2.500l2 2.500" fill="none" stroke={K} /></>,
  Widen: <><path d="M1.500 1v12M16.500 5v10" stroke={BLUE} /><path d="M3 8.500h5M5 6L3 8.500l2 2.500M15 8.500h-5m3-2.500l2 2.500l-2 2.500" fill="none" stroke={K} /></>,
  'Zoom In': <><circle cx="7" cy="7" r="5" fill="#c0ffff" stroke={K} /><path d="M7 4v6M4 7h6" stroke={N} strokeWidth="2" /><path d="M11 11l6 6" stroke={N} strokeWidth="2.500" /></>,
  'Zoom Out': <><circle cx="7" cy="7" r="5" fill="#eee" stroke="#909090" /><path d="M4 7h6" stroke="#909090" strokeWidth="2" /><path d="M11 11l6 6" stroke="#a0a0a0" strokeWidth="2.500" /></>,
  Pointer: <path d="M5.500 1.500v13l3-3l2 5l2-1l-2-5h4z" fill="#fff" stroke={K} />,
  'Text Chart': <><path d="M1 1h13v11H1z" fill={K} /><path d="M1 1h13v2H1z" fill={BLUE} /><path d="M1 9l3-2l3 2l3-3l3 1" stroke={LIME} fill="none" /><path d="M9 8h9v2.500h-3V17h-3v-6.500H9z" fill={K} stroke="#fff" strokeWidth=".5" /></>,
  Tools: <><path d="M3 16L13 5" stroke="#808000" strokeWidth="2.500" /><path d="M4 5l11 11" stroke={K} strokeWidth="2" /><path d="M2 5l5-4l3 3l-4 3z" fill="#808000" stroke={K} /><path d="M12 5l2-3l3 3l-2 2" fill="none" stroke={K} strokeWidth="1.500" /></>,
  'Add Study': <><path d="M4 1v6M1 4h6" stroke={BLUE} strokeWidth="2" /><path d="M9 1h8v9H9z" fill="#ffffa0" stroke={K} /><path d="M10 4h6m-6 3h6" stroke={K} /><path d="M6.500 7.500h7v6h-7zM1.500 10.500h8v6h-8z" fill="#fff" stroke={N} /></>,
  Notes: <><path d="M3 1h12l1 11l-5 1l-1 4l-2-4H3z" fill="#e4e4e4" stroke="#909090" /><path d="M4 4h10M4 7h10M4 10h9" stroke="#909090" /></>,
  Pitchfork: <path d="M1 17l7-8M8 3c-1 5 1 7 7 6M8 9l5-7M8 3V1M15 9l2-1M11 8l6-5" fill="none" stroke={K} />,
  Cycles: <path d="M1.500 1v16M5.500 1v16M9.500 1v16M13.500 1v16M17.500 1v16" stroke={K} />,
  Retracement: <path d="M1 2.500h16M1 7.500h16M1 12.500h16M1 16.500h16" stroke={K} />,
  Calculator: <><path d="M1 1.500h16M1 4.500h16" stroke={K} /><path d="M5.500 6.500h8v11h-8z" fill="#fff" stroke={N} /><path d="M7 8h5v2H7zM7 12h1v1H7zM9 12h1v1H9zM11 12h1v1h-1zM7 15h1v1H7zM9 15h1v1H9zM11 15h1v1h-1z" fill={N} /></>,
  Arc: <path d="M1 15C1 8 7 3 13 5M5 15c0-4 3-7 7-6M8 14c0-2 1-3 3-2M8 14L17 3M15 8v7" fill="none" stroke={K} />,
  Fan: <><path d="M1 16.500h16M1 16L16 2" stroke={K} strokeDasharray="2 1" /><path d="M1 16L17 7M1 16l16-4" stroke={K} strokeDasharray="2 2" /></>,
  'Price Levels': <path d="M1 16l4-5l3 5V2m0 .5h9M9 5.500h8M9 8.500h8M9 11.500h8M9 14h3" fill="none" stroke={K} />,
  'Time Zones': <path d="M1 3l7 7M8.500 2v15M12.500 2v15M16.500 2v15" stroke={K} />,
  'Gann Fan': <path d="M1 16.500h16M1 16L14 1M1 16L17 8M1 16l16-4" fill="none" stroke={K} />,
  Horizontal: <path d="M1 8.500h16M4 5.500l-3 3l3 3M14 5.500l3 3l-3 3" fill="none" stroke={K} />,
  Parallel: <path d="M1 13L12 2M4 15L15 3M8 16l8-9" stroke={K} />,
  Regression: <path d="M1.500 17V9a7.500 7.500 0 0 1 15 0v8M3 14l3-3l3 3l3-3l3 3M6 17v-6m6 6v-6" fill="none" stroke={K} />,
  Pencil: <><path d="M1 16.500h8l2-3" fill="none" stroke={K} /><path d="M9 13l5-11l3 1l-5 11z" fill="#f0e060" stroke={K} /><path d="M14 1h3v3h-3z" fill="#800000" /></>,
  Curve: <path d="M3 15c6 0 11-5 12-13" fill="none" stroke={K} />,
  'Down Arrow': <path d="M7 4h4v6h2l-4 5l-4-5h2z" fill={RED} />,
  'Up Arrow': <path d="M7 15h4V8h2L9 3L5 8h2z" fill={BLUE} />,
  Ellipse: <ellipse cx="9" cy="9" rx="7.500" ry="6.500" fill="none" stroke={K} />,
  Rectangle: <path d="M2.500 2.500h14v13h-14z" fill="none" stroke={K} />,
};

const ToolButton = ({ name }) => (
  <button
    type="button"
    aria-label={name}
    className={`flex h-[25px] w-[23px] shrink-0 items-center justify-center ${name === 'Pointer' ? 'border border-r-white border-b-white border-l-gray-500 border-t-gray-500 bg-gray-50' : ''}`}
  >
    <svg width="18" height="18" viewBox="0 0 18 18" className="shrink-0">{GLYPHS[name]}</svg>
  </button>
);

const Separator = () => (
  <div className="flex w-2 shrink-0 justify-center"><span className="h-[22px] w-px bg-gray-400" /></div>
);

const Grip = () => <span className="h-[26px] w-0 shrink-0 border-l-2 border-dotted border-gray-400" />;

const ToolGroups = ({ groups }) => groups.map((group, i) => (
  <React.Fragment key={group[0]}>
    {i > 0 && <Separator />}
    {group.map((name) => <ToolButton key={name} name={name} />)}
  </React.Fragment>
));

const Toolbar = () => (
  <div className="flex h-[31px] items-center border-b border-gray-500 bg-[#f0f0f0] pl-[25px]">
    <Grip />
    <div className="flex items-center pl-1">
      <ToolGroups groups={[
        ['New', 'Open', 'Save All', 'Import', 'Folder'],
        ['New Window', 'Print'],
        ['Send Back', 'Send Group', 'Lock', 'Satellite', 'Symbols'],
      ]} />
      <Separator />
    </div>
    <div className="relative flex items-center">
      <select aria-label="Symbol" className="h-6 w-[137px] appearance-none border border-gray-200 bg-white text-sm outline-none" defaultValue="">
        <option value=""></option>
      </select>
      <svg width="9" height="5" viewBox="0 0 9 5" className="pointer-events-none absolute right-[6px]"><path d="M0 0h9l-4.500 5z" /></svg>
    </div>
    <button type="button" aria-label="Go" className="flex h-6 w-6 items-center justify-center pr-2">
      <svg width="5" height="9" viewBox="0 0 5 9"><path d="M0 0v9l5-4.500z" /></svg>
    </button>
    <ToolButton name="Lookup" />
    <div className="w-[18px]" />
    <Grip />
    <div className="flex items-center pl-1">
      <ToolGroups groups={[
        ['Quotes', 'Sheet', 'Table'],
        ['Indicator', 'Arrows', 'Charts'],
        ['Format', 'Properties'],
        ['Schedule', 'Clock', 'Bars', 'OHLC', 'Candle'],
        ['Narrow', 'Widen'],
        ['Zoom In', 'Zoom Out'],
        ['Pointer', 'Text Chart'],
        ['Tools'],
        ['Add Study'],
        ['Notes'],
      ]} />
    </div>
    <div className="w-[26px]" />
    <Grip />
    <div className="flex items-center pl-1">
      <ToolGroups groups={[
        ['Pitchfork', 'Cycles', 'Retracement', 'Calculator', 'Arc', 'Fan', 'Price Levels', 'Time Zones', 'Gann Fan', 'Horizontal', 'Parallel', 'Regression', 'Pencil'],
        ['Curve', 'Down Arrow', 'Up Arrow', 'Ellipse', 'Rectangle'],
      ]} />
      <button type="button" className="w-[23px] text-[11px] leading-4 font-['Liberation_Sans',sans-serif]">abc</button>
    </div>
  </div>
);

const Logo = () => (
  <svg width="18" height="26" viewBox="0 0 18 26" className="shrink-0">
    <path d="M3 22C0 15 2 8 7 4c4-3 9-2 10 2c1 5-2 8-5 10c-1 3-2 6-5 8c0-4 1-7 3-9c1-3 0-5-1-6c-3 3-4 8-3 13z" fill="#1454e0" />
    <path d="M4 18C4 12 6 8 9 5M13 12c2-3 3-5 1-7" fill="none" stroke="#6fb4ff" strokeWidth="1.500" />
    <path d="M8 23c1-4 2-6 4-8" stroke="#0a2a90" strokeWidth="1.500" fill="none" />
  </svg>
);

const TitleBar = () => (
  <header className="flex h-[29px] items-start justify-between border-b border-slate-600 bg-[linear-gradient(90deg,#98b0ca_0%,#bccddf_8%,#b8cadf_32%,#8aa9cb_36%,#93bce8_40%,#a5cbf3_50%,#9cc3ee_62%,#86b1e0_68%,#a8d0fa_77.5%,#1f4066_78.5%,#2c5480_90%,#4a6c92_100%)]">
    <div className="flex h-[30px] items-center gap-[7px]">
      <Logo />
      <h1 className="text-[14px] leading-5 whitespace-pre text-black">TradeStation 8.1 - STOX_FIB - STOX_TF30 - [Chart Analysis - GS:STOXX50-DT  30 min  [EUREX] STOXX FUTURES]</h1>
    </div>
    <div className="mr-[3px] flex h-6 overflow-hidden rounded-b-md border border-t-0 border-slate-200">
      <button type="button" aria-label="Minimize" className="flex w-[38px] items-end justify-center border-r border-slate-300 bg-linear-to-b from-slate-400 to-slate-500 pb-1">
        <span className="h-[5px] w-[17px] border border-slate-600 bg-white" />
      </button>
      <button type="button" aria-label="Restore" className="flex w-9 items-center justify-center border-r border-slate-300 bg-linear-to-b from-slate-400 to-slate-500">
        <svg width="20" height="18" viewBox="0 0 20 18"><path d="M6.500 1.500h12v11h-12z" fill="#fff" stroke="#555" /><path d="M1.500 4.500h13v12h-13z" fill="#fff" stroke="#555" /><path d="M5.500 8.500h5v4h-5z" fill="#8aa0b8" stroke="#555" /></svg>
      </button>
      <button type="button" aria-label="Close" className="flex w-[63px] items-center justify-center bg-linear-to-b from-[#dd9a80] via-[#c34a28] to-[#d4603a]">
        <svg width="18" height="16" viewBox="0 0 18 16"><path d="M1 1h5l3 4l3-4h5l-5.500 7l5.500 7h-5l-3-4l-3 4H1l5.500-7z" fill="#fff" stroke="#555" /></svg>
      </button>
    </div>
  </header>
);

const ChildButtons = () => (
  <div className="flex shrink-0 gap-px">
    {['Minimize chart', 'Restore chart', 'Close chart'].map((name, i) => (
      <button key={name} type="button" aria-label={name} className="flex h-[27px] w-[23px] shrink-0 items-center justify-center border border-slate-400 bg-[#dce9f7]">
        <svg width="9" height="9" viewBox="0 0 9 9" fill="none" stroke="#6f8094" strokeWidth="1.500">
          {i === 0 && <path d="M1 7.500h6" strokeWidth="2" />}
          {i === 1 && <path d="M3 3V1h5v4H6M1 4h5v4H1z" />}
          {i === 2 && <path d="M1.500 1.500l6 6m0-6l-6 6" strokeWidth="2.500" />}
        </svg>
      </button>
    ))}
  </div>
);

const MENUS = [
  ['File', 'w-[37px]'], ['Edit', 'w-10'], ['View', 'w-[46px]'], ['Insert', 'w-[50px]'],
  ['Format', 'w-[61px]'], ['Drawing', 'w-[70px]'], ['Window', 'w-[69px]'], ['Help', 'w-10'],
];

const MenuBar = () => (
  <nav className="flex h-[30px] items-center border-b border-gray-400 bg-[linear-gradient(#ffffff,#eef1f8_30%,#d5dcec_33%,#e1e7f5)]">
    <svg width="19" height="17" viewBox="0 0 19 17" className="mr-2 ml-[7px]">
      <path d="M0 0h19v17H0z" />
      <path d="M0 0h19v2H0z" fill={BLUE} />
      <path d="M2 12V8m2 2V6m2 4V7m2 4V6m2 3V5m2 3V4m2 4V3" fill="none" stroke="#00a000" />
      <path d="M1 14.500h16M17.500 3v12" stroke="#800000" strokeDasharray="2 1" />
    </svg>
    {MENUS.map(([name, width]) => (
      <button key={name} type="button" className={`text-left text-[14px] leading-5 text-black ${width}`}>{name}</button>
    ))}
    <div className="ml-auto pr-px"><ChildButtons /></div>
  </nav>
);

const ScrollBar = () => (
  <div className="flex h-[22px] items-center justify-between bg-[#ededed] pr-[9px] pl-[9px]">
    <svg width="5" height="9" viewBox="0 0 5 9"><path d="M5 0v9L0 4.500z" fill="#333" /></svg>
    <div className="flex items-center gap-[10px]">
      <div className="flex h-[19px] w-[19px] items-center justify-center gap-[2px] rounded-xs border border-gray-400 bg-linear-to-b from-gray-50 to-gray-300">
        <span className="h-2 w-px bg-gray-700" /><span className="h-2 w-px bg-gray-700" /><span className="h-2 w-px bg-gray-700" />
      </div>
      <svg width="5" height="9" viewBox="0 0 5 9"><path d="M0 0v9l5-4.500z" fill="#444" /></svg>
    </div>
  </div>
);

const TABS = ['STOX_TF60', 'STOX_TF120', 'STOX TF240', 'STOX _100', 'STOX_TF30', 'FIB_TF60', 'FIB_TF120', 'FIB TF240', 'FIB_100', 'FIB_TF30', 'FIB Frame bassi', 'FIB Giornaliero', 'STOXX frame bassi', 'STOXX giornaliero', 'No PREZZI', 'ANNUALE Indici'];

const TabEdge = ({ left, right, leftActive, rightActive }) => (
  <svg width="8" height="18" viewBox="0 0 8 18" className="shrink-0">
    {leftActive && <path d="M0 0h8L2 18H0z" fill="#fff" />}
    {rightActive && <path d="M8 0H0l6 18h2z" fill="#fff" />}
    {left && <path d={right && !leftActive ? 'M4.500 10L2 17.500H0' : 'M7.500 0L2 17.500H0'} fill="none" stroke={K} />}
    {right && <path d={leftActive ? 'M5 10l1.500 7.500H8' : 'M.5 0L6 17.500h2'} fill="none" stroke={K} />}
  </svg>
);

const WorkspaceTabs = () => {
  const [active, setActive] = useState('STOX_TF30');
  const current = TABS.indexOf(active);
  return (
    <div className="flex h-[19px] border-t border-black bg-[#f0f0f0] font-['Liberation_Sans',sans-serif]">
      {['M3 1v7M9 1v7L5 4.500z', 'M7 1v7L3 4.500z', 'M3 1v7l4-3.500z', 'M3 1v7l4-3.500zM9 1v7'].map((d, i) => (
        <button key={d} type="button" aria-label={['First', 'Previous', 'Next', 'Last'][i]} className="flex h-[18px] w-[17px] shrink-0 items-center justify-center border border-t-white border-r-gray-500 border-b-gray-500 border-l-white">
          <svg width="11" height="9" viewBox="0 0 11 9"><path d={d} fill="#555" stroke="#555" /></svg>
        </button>
      ))}
      <TabEdge right rightActive={current === 0} />
      {TABS.map((tab, i) => (
        <React.Fragment key={tab}>
          <button
            type="button"
            onClick={() => setActive(tab)}
            className={`h-[18px] shrink-0 border-b border-black text-xs leading-4 text-black whitespace-nowrap ${i < 6 ? 'px-[6px]' : 'px-[7px]'} ${tab === active ? 'border-b-white bg-white font-bold' : ''}`}
          >
            {tab}
          </button>
          <TabEdge left right={i < TABS.length - 1} leftActive={i === current} rightActive={i + 1 === current} />
        </React.Fragment>
      ))}
    </div>
  );
};

const STATUS = [
  ['Acct:', 'w-[51px]'], ['Open Psns:', 'w-[91px]'], ['DT BP:', 'w-[63px]'], ['Purch Pwr:', 'w-[87px]'],
  ['Closed P/L:', 'w-[93px]'], ['RT TE:', 'w-[60px]'], ['Open P/L:', 'w-[84px]'],
  ['ORDER BAR', 'w-[88px] text-[#108010]'], ['MACROS', 'w-[68px] text-[#108010]'],
];

const StatusBar = () => (
  <footer className="flex h-5 items-end border-b border-slate-600 bg-[#f0eceb] pl-[2px] text-[14px] leading-4 whitespace-nowrap text-black">
    <span className="mr-auto">For Help, press F1</span>
    {STATUS.map(([text, cls]) => (
      <span key={text} className={`shrink-0 border-r border-gray-300 pl-1 ${cls}`}>{text}</span>
    ))}
    <span className="flex h-full w-[19px] items-center justify-center border-r border-gray-300 pb-1">
      <svg width="13" height="13" viewBox="0 0 13 13"><circle cx="6.500" cy="6.500" r="5" fill="#e00000" stroke="#400000" strokeWidth="1.500" /><circle cx="5" cy="4.500" r="1.500" fill="#ff9090" /></svg>
    </span>
    <span className="w-[123px] pl-1">20/07/2022 12:36</span>
  </footer>
);

const App = () => (
  <div className="flex min-h-screen flex-col overflow-hidden bg-[#dfe8f2] font-['Noto_Sans',sans-serif]">
    <TitleBar />
    <MenuBar />
    <Toolbar />
    <main className="relative border-r-2 border-l-2 border-r-gray-100 border-l-gray-400 bg-[#050608] font-['Liberation_Sans',sans-serif]">
      <PricePane />
      <MacdPane />
      <CciPane />
      <DateAxis />
      <div className="absolute top-[6px] -right-[2px] w-16 overflow-hidden bg-white pt-px">
        <ChildButtons />
      </div>
    </main>
    <ScrollBar />
    <WorkspaceTabs />
    <StatusBar />
  </div>
);

export default App;
